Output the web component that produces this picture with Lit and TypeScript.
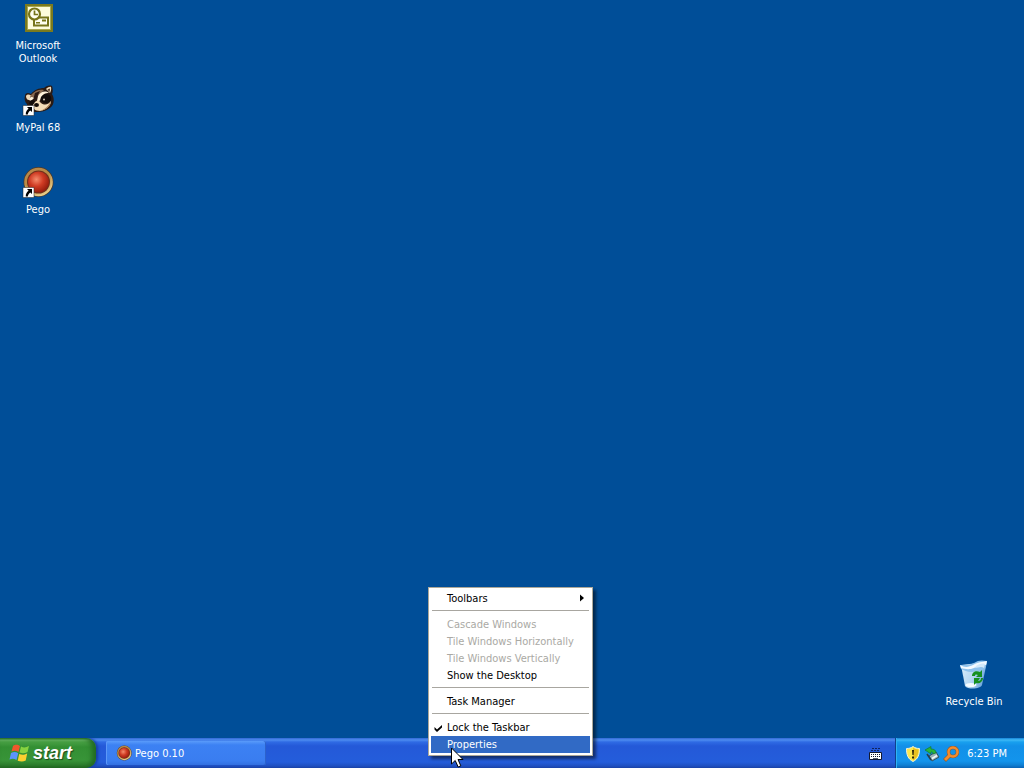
import { LitElement, html, css, svg, nothing } from "lit";
import { customElement, property } from "lit/decorators.js";

const orb = svg`
  <defs>
    <radialGradient id="ring" cx=".4" cy=".3" r=".75">
      <stop offset="0" stop-color="#b4844c"/><stop offset=".6" stop-color="#b98b45"/><stop offset="1" stop-color="#f2dc98"/>
    </radialGradient>
    <radialGradient id="ball" cx=".4" cy=".38" r=".65">
      <stop offset="0" stop-color="#f48c6c"/><stop offset=".5" stop-color="#d03c24"/><stop offset="1" stop-color="#941c0c"/>
    </radialGradient>
  </defs>
  <circle cx="16.500" cy="16" r="15" fill="#4c3828"/>
  <circle cx="16.500" cy="16" r="14.300" fill="url(#ring)"/>
  <circle cx="16.500" cy="16" r="11.500" fill="#70301c"/>
  <circle cx="16.500" cy="16" r="10.500" fill="url(#ball)"/>`;

const shortcut = svg`
  <path d="M1 21.500h11v10H1z" fill="#fff" stroke="#222" stroke-width=".5"/>
  <path d="M5 23h5v5l-1.700-1.600C7 27.500 6 28.500 5.800 30.500H3.800C3.500 28 4.800 26 6.600 24.700z" fill="#000"/>`;

const pictures: Record<string, unknown> = {
  outlook: svg`
    <path d="M3 2h28v28H3z" fill="#7b7a1e"/>
    <path d="M5.500 4.500h23v23h-23z" fill="#fdfcdc" stroke="#a9a850"/>
    <path d="M12 15.500h14v8H12z" fill="#fffff0" stroke="#77751a" stroke-width="2"/>
    <path d="M20 17.500h4v2h-4zM14 20h4v1.500h-4z" fill="#77751a"/>
    <circle cx="12.500" cy="12" r="5.500" fill="#fffff0" stroke="#77751a" stroke-width="2.200"/>
    <path d="M12.500 8.500V12.500H16" fill="none" stroke="#77751a" stroke-width="1.700"/>`,
  mypal: svg`
    <path d="M3 12c0-3 3-4 6-2 3-4 8-6 13-6 2-2 5-3 8-2 1 3 1 6 0 8 3 5 2 11-2 14-4 3-9 4-14 4-5 0-9-3-9-8-2-2-3-5-2-8z" fill="#2a1a14"/>
    <path d="M4 12c1-2 3-2 5-.500L7 16c-2 0-3-2-3-4zM24 5c2-2 4-2.500 5-2 .500 2 0 4-1 6z" fill="#efd9b8"/>
    <path d="M25.500 5.500 28 4.500 27.500 8z" fill="#4a3020"/>
    <path d="M9 11c4-5 9-6 13-5l-5 5-8 4z" fill="#8a6a50"/>
    <path d="M13 9l5-2-3 6-4 3z" fill="#2a1812"/>
    <path d="M7 16c0-3 3-4 5-2l-3 3zM16 12c2-4 7-6 11-3-4 0-6 1-8 5l-2 4-2-1z" fill="#fff2da"/>
    <path d="M19 13c3-4 8-4 10 0 1 4-2 6-6 6-3 0-5-3-4-6z" fill="#120c0a"/>
    <path d="M8 17c2-2 5-1 5 1l-2 4-4-2z" fill="#120c0a"/>
    <path d="M13 18l3-2 3 3c4 3 8 1 10-2 0 5-5 9-11 10-5 0-8-3-7-6z" fill="#f3dcb8"/>
    <path d="M29 17c0 5-5 9-11 10 5-2 8-4 11-10z" fill="#a87c52"/>
    <ellipse cx="14.500" cy="21" rx="2.500" ry="2" fill="#120b08"/>
    <circle cx="22" cy="15.500" r="1" fill="#d8c8b8"/>
    ${shortcut}`,
  pego: svg`${orb}${shortcut}`,
  bin: svg`
    <defs><linearGradient id="glass" x2="1" y2=".4"><stop stop-color="#dceefa"/><stop offset=".6" stop-color="#b4d6f2"/><stop offset="1" stop-color="#6fa6dc"/></linearGradient></defs>
    <path d="M3 7l26-3-5 23c-1 4-14 5-17 1z" fill="url(#glass)"/>
    <path d="M2 7c6 0 10 0 14-2 4-3 8-3 13-2l-2 8c-5 2-9 3-13 3-5 0-8-2-11-3z" fill="#8fc2ec"/>
    <path d="M2 7c5 3 9 2 13 0 5-3 9-3 14-4l-1 4c-5-1-8 1-12 3-5 2-9 1-13 0z" fill="#f4faff"/>
    <path d="M18 8c3-2 6-3 9-2l-1 4c-3-2-6 0-9 0z" fill="#d4eafb"/>
    <ellipse cx="13" cy="27" rx="5.500" ry="2" fill="#f5fbff"/>
    <path d="M14 18c0-4 4-6 8-4l2-2v7h-6l2-2c-2-1-3-.500-3 1zM25 20c0 4-4 6-7 5l-2 2v-7h6l-2 3c2 0 3-1 3-3z" fill="#179020"/>`,
};

@customElement("desktop-icon")
export class DesktopIcon extends LitElement {
  @property() label = "";
  @property() picture = "";
  static styles = css`
    :host { display: block; }
    button {
      all: unset; box-sizing: border-box; width: 76px;
      display: flex; flex-direction: column; align-items: center; gap: 5px;
      color: #fff; text-align: center; line-height: 13px;
    }
    svg { width: 32px; height: 32px; }
    .label { width: 64px; }
  `;
  render() {
    return html`<button>
      <svg viewBox="0 0 32 32" aria-hidden="true">${pictures[this.picture]}</svg>
      <span class="label">${this.label}</span>
    </button>`;
  }
}

interface Item {
  label: string;
  disabled?: boolean;
  checked?: boolean;
  submenu?: boolean;
  active?: boolean;
}

const groups: Item[][] = [
  [{ label: "Toolbars", submenu: true }],
  [
    { label: "Cascade Windows", disabled: true },
    { label: "Tile Windows Horizontally", disabled: true },
    { label: "Tile Windows Vertically", disabled: true },
    { label: "Show the Desktop" },
  ],
  [{ label: "Task Manager" }],
  [{ label: "Lock the Taskbar", checked: true }, { label: "Properties", active: true }],
];

@customElement("context-menu")
export class ContextMenu extends LitElement {
  static styles = css`
    :host { display: block; }
    .menu {
      box-sizing: border-box; width: 165px; padding: 2px;
      background: #fff; border: 1px solid #aca899;
      box-shadow: 3px 3px 3px rgba(0, 0, 0, 0.5);
    }
    button {
      all: unset; box-sizing: border-box; width: 100%; height: 17px;
      display: grid; grid-template-columns: 16px 1fr 12px; align-items: center;
      line-height: 17px; white-space: nowrap; color: #000;
    }
    button:disabled { color: #aaa9a4; }
    .active { background: #316ac5; color: #fff; }
    hr { height: 1px; margin: 3px 1px 5px; border: 0; background: #a8a6a0; }
    svg { display: block; width: 9px; height: 9px; margin-left: 3px; }
    .arrow { margin-left: 0; }
  `;
  render() {
    return html`<div class="menu" role="menu">
      ${groups.map((items, i) => html`
        ${i ? html`<hr />` : nothing}
        ${items.map((item) => html`
          <button role="menuitem" class=${item.active ? "active" : ""} ?disabled=${item.disabled}>
            <span>${item.checked ? html`<svg viewBox="0 0 9 9"><path d="M.5 4v2.500L3 9l5-4.500V2L3 6.500z"/></svg>` : nothing}</span>
            <span>${item.label}</span>
            ${item.submenu ? html`<svg class="arrow" viewBox="0 0 9 9"><path d="M2 .5v7l4-3.500z"/></svg>` : nothing}
          </button>`)}
      `)}
    </div>`;
  }
}

@customElement("task-bar")
export class TaskBar extends LitElement {
  static styles = css`
    :host { display: block; }
    .bar {
      display: flex; height: 30px; color: #fff;
      background: linear-gradient(#3168d5 0, #4d8cf0 2px, #2f6be4 4px, #2459d8 8px, #245ddb 24px, #1f4fc0 28px, #1941a5);
    }
    button { all: unset; box-sizing: border-box; display: flex; align-items: center; }
    .start {
      width: 96px; padding-left: 9px; gap: 3px;
      border-radius: 0 10px 10px 0;
      background: linear-gradient(#256f25 0, #6cba68 2px, #48a044 4px, #338f33 9px, #389438 22px, #2d7f2d 27px, #1f651f);
      box-shadow: inset -4px 0 5px #226a22, 2px 0 3px #163fa0;
      font: italic bold 18px "Liberation Sans", Arial, sans-serif;
      text-shadow: 1px 1px 1px #1c481c;
    }
    .flag { width: 21px; height: 20px; }
    .task {
      width: 160px; height: 24px; margin: 3px 0 0 10px; padding-left: 10px; gap: 3px;
      border-radius: 2px;
      background: linear-gradient(#5a9bfa, #3c81f3 4px, #3a7df0 20px, #3370e0);
      box-shadow: inset 1px 0 #5c98f8, inset -1px 0 #2c62cc;
    }
    .orb { width: 16px; height: 16px; }
    .spacer { flex: 1; }
    .keys { width: 15px; height: 14px; margin: 9px 12px 0 0; }
    .tray {
      box-sizing: border-box; width: 129px; padding: 1px 17px 0 9px;
      display: flex; align-items: center; gap: 3px;
      border-left: 1px solid #10408c;
      background: linear-gradient(#1583d8 0, #3eb9f6 2px, #18a0ee 4px, #1290e8 8px, #1394ec 23px, #0f80d4 27px, #0a62b4);
      box-shadow: inset 1px 0 #2fb4f4;
    }
    .tray svg { width: 16px; height: 16px; }
    time { margin-left: auto; white-space: nowrap; }
  `;
  render() {
    return html`<footer class="bar">
      <button class="start">
        <svg class="flag" viewBox="0 0 21 20" aria-hidden="true">
          <path d="M4 3c3-2 5-1 7 0L9.500 9C7 7.500 5 7.500 2.500 8.500z" fill="#f0582c"/>
          <path d="M12 3.500c3 1.500 5 1 8-.5L18.500 9c-3 1.500-5 1.500-8 .5z" fill="#86d240"/>
          <path d="M2 10c3-1.500 5-1 7.200.300L7.500 17C5 15.500 3 15.500 .5 16.500z" fill="#5c94fc"/>
          <path d="M10.200 11c3 1.200 5 1 8-.500l-1.500 7c-3 1.500-5 1.200-8 .200z" fill="#fcd030"/>
        </svg>
        <span>start</span>
      </button>
      <button class="task">
        <svg class="orb" viewBox="0 0 32 32" aria-hidden="true">${orb}</svg>
        <span>Pego 0.10</span>
      </button>
      <span class="spacer"></span>
      <svg class="keys" viewBox="0 0 15 14" aria-hidden="true">
        <path d="M4 1.500h8M3 3.500h9" stroke="#10245c" stroke-dasharray="2 1"/>
        <path d="M1.500 5.500h12v7h-12z" fill="#fff" stroke="#101830"/>
        <path d="M3 7.500h9M3 9.500h9" stroke="#101830" stroke-dasharray="1 1"/>
        <path d="M5 11.500h5" stroke="#505868"/>
      </svg>
      <div class="tray">
        <svg viewBox="0 0 16 16" role="img" aria-label="Security alert">
          <path d="M8 .5C6 2 4 2.500 1.500 2.500 1.500 9 3 13 8 15.500 13 13 14.500 9 14.500 2.500 12 2.500 10 2 8 .5z" fill="#fbe84c" stroke="#f0f0d8"/>
          <path d="M8 1.500v13C12 12 13.500 9 13.500 3.500 11 3 10 3 8 1.500z" fill="#e8c020"/>
          <path d="M7 4h2l-.4 5H7.400zM7 10.500h2v2H7z" fill="#302808"/>
        </svg>
        <svg viewBox="0 0 16 16" role="img" aria-label="Safely remove hardware">
          <path d="M5 10l7-4 3 5-7 4z" fill="#9cb4b8" stroke="#34505c"/>
          <path d="M8 12.500l5-3" stroke="#f4f8f8" stroke-width="1.500"/>
          <path d="M1 4l6-3.500V3c3 0 5 1 5 4L9 8C9 6 8 6 7 6v2z" fill="#28b43c" stroke="#107428" stroke-width=".6"/>
          <path d="M3 8l4 6" stroke="#283c48" stroke-width="1.500"/>
        </svg>
        <svg viewBox="0 0 16 16" role="img" aria-label="Search">
          <circle cx="10" cy="6" r="4.500" fill="none" stroke="#8c5a30" stroke-width="3.500"/>
          <path d="M6.500 9.500l-5 5" stroke="#8c5a30" stroke-width="4"/>
          <circle cx="10" cy="6" r="4.500" fill="none" stroke="#f48c2c" stroke-width="2.500"/>
          <path d="M7 9l-5 5" stroke="#f48c2c" stroke-width="3"/>
        </svg>
        <time>6:23 PM</time>
      </div>
    </footer>`;
  }
}

@customElement("app-root")
export class AppRoot extends LitElement {
  static styles = css`
    :host {
      display: flex; flex-direction: column; height: 100vh; position: relative; overflow: hidden;
      font: 11px "DejaVu Sans Condensed", Tahoma, "Noto Sans", sans-serif;
      background: #004e98; cursor: default; user-select: none;
    }
    .desktop { flex: 1; display: flex; justify-content: space-between; }
    .icons { display: grid; grid-auto-rows: 82px; align-content: start; padding-top: 2px; }
    .bin { align-self: flex-end; padding: 0 12px 30px 0; }
    context-menu { position: absolute; left: 428px; bottom: 12px; }
    .pointer { position: absolute; left: 451px; bottom: 0; width: 13px; height: 21px; }
  `;
  render() {
    return html`
      <main class="desktop">
        <div class="icons">
          <desktop-icon label="Microsoft Outlook" picture="outlook"></desktop-icon>
          <desktop-icon label="MyPal 68" picture="mypal"></desktop-icon>
          <desktop-icon label="Pego" picture="pego"></desktop-icon>
        </div>
        <desktop-icon class="bin" label="Recycle Bin" picture="bin"></desktop-icon>
      </main>
      <task-bar></task-bar>
      <context-menu></context-menu>
      <svg class="pointer" viewBox="0 0 13 21" aria-hidden="true">
        <path d="M.5 1v16l3.700-3.500 3 6.500 2.600-1.200L7 12.500h5z" fill="#fff" stroke="#000"/>
      </svg>`;
  }
}
